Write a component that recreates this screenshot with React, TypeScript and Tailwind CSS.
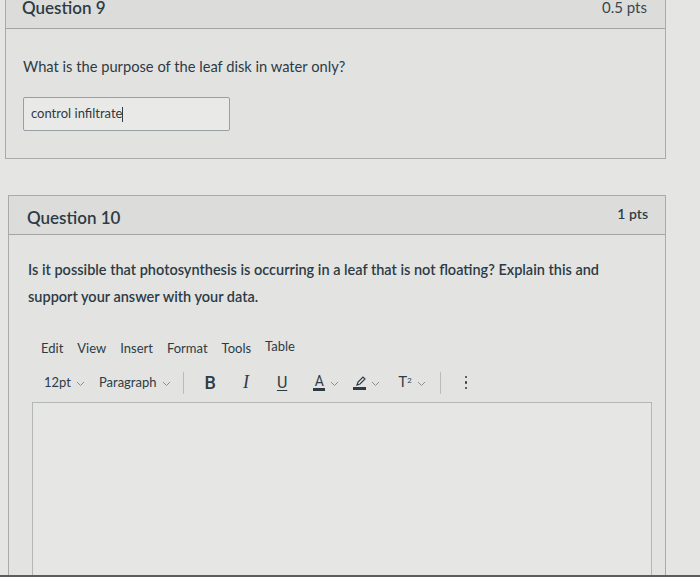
import React from 'react'

function Chevron() {
  return (
    <svg width="9" height="6" viewBox="0 0 9 6" className="ml-[5px] mt-[2px]" fill="none" stroke="#8a9096" strokeWidth="1">
      <path d="M1 1l3.5 3.5L8 1" />
    </svg>
  )
}

export default function App() {
  const font = { fontFamily: 'Lato, "Open Sans", sans-serif' }
  return (
    <div style={font} className="relative w-[700px] h-[577px] overflow-hidden bg-[#e5e6e4] text-[#2d3b45]">
      {/* Question 9 */}
      <div className="ml-[5px] -mt-[14px] w-[661px] border border-[#a9abaa] bg-[#e2e3e1]">
        <div className="flex items-center justify-between h-[42px] pl-[16px] pr-[18px] bg-[#dcdddb] border-b border-[#a3a5a4]">
          <span className="text-[17px] font-semibold">Question 9</span>
          <span className="text-[15px] text-[#3a454e]">0.5 pts</span>
        </div>
        <div className="h-[129px] pl-[17px] pt-[27px]">
          <p className="text-[14.7px] leading-[20px]">What is the purpose of the leaf disk in water only?</p>
          <div className="mt-[21px] w-[207px] h-[34px] border border-[#98a0a6] rounded-[2px] bg-[#e9eae8] flex items-center pl-[7px] text-[13px]">
            control infiltrate<span className="w-px h-[15px] bg-[#2d3b45]" />
          </div>
        </div>
      </div>

      {/* Question 10 */}
      <div className="ml-[8px] mt-[36px] w-[658px] h-[420px] border border-[#a9abaa] bg-[#e3e4e2]">
        <div className="flex items-center justify-between h-[39px] pl-[18px] pr-[17px] bg-[#dcdddb] border-b border-[#a3a5a4]">
          <span className="text-[17px] font-semibold mt-[6px]">Question 10</span>
          <span className="text-[14px] font-semibold -mt-[4px]">1 pts</span>
        </div>
        <div className="pl-[19px] pr-[14px] pt-[21px]">
          <p className="text-[14.5px] leading-[27px] font-semibold w-[600px]">
            Is it possible that photosynthesis is occurring in a leaf that is not floating? Explain this and support your answer with your data.
          </p>
          <div className="mt-[29px] ml-[13px] flex items-center gap-[14px] text-[13px] text-[#2d3b45]">
            <span>Edit</span>
            <span>View</span>
            <span>Insert</span>
            <span>Format</span>
            <span>Tools</span>
            <span className="-mt-[4px]">Table</span>
          </div>
          <div className="mt-[13px] ml-[16px] flex items-center h-[22px] text-[13px]">
            <span>12pt</span>
            <Chevron />
            <span className="ml-[14px]">Paragraph</span>
            <Chevron />
            <span className="ml-[12px] w-px h-[22px] bg-[#b8bcbf]" />
            <span className="ml-[21px] text-[18px] font-medium" style={{ fontFamily: 'Roboto, sans-serif' }}>B</span>
            <span className="ml-[27px] text-[18px] italic" style={{ fontFamily: '"Liberation Serif", serif' }}>I</span>
            <span className="ml-[28px] text-[16px] underline underline-offset-2" style={{ fontFamily: 'Roboto, sans-serif' }}>U</span>
            <span className="ml-[26px] flex flex-col items-center">
              <span className="text-[14px] leading-[14px]" style={{ fontFamily: 'Roboto, sans-serif' }}>A</span>
              <span className="w-[12px] h-[3px] bg-[#2d3b45]" />
            </span>
            <Chevron />
            <span className="ml-[14px] flex flex-col items-center">
              <svg width="12" height="12" viewBox="0 0 12 12" fill="none" stroke="#2d3b45" strokeWidth="1.2">
                <path d="M3 10l1-3 5-5 2 2-5 5z" />
              </svg>
              <span className="w-[13px] h-[3px] bg-[#2d3b45]" />
            </span>
            <Chevron />
            <span className="ml-[18px] text-[15px]" style={{ fontFamily: 'Roboto, sans-serif' }}>
              T<sup className="text-[8px]">2</sup>
            </span>
            <Chevron />
            <span className="ml-[14px] w-px h-[22px] bg-[#b8bcbf]" />
            <span className="ml-[24px] flex flex-col gap-[3px]">
              <span className="w-[2.5px] h-[2.5px] rounded-full bg-[#2d3b45]" />
              <span className="w-[2.5px] h-[2.5px] rounded-full bg-[#2d3b45]" />
              <span className="w-[2.5px] h-[2.5px] rounded-full bg-[#2d3b45]" />
            </span>
          </div>
          <div className="mt-[8px] ml-[4px] w-[620px] h-[200px] border border-[#b4b7b8] bg-[#e6e7e5]" />
        </div>
      </div>

      <div className="absolute bottom-0 left-0 w-full h-[2px] bg-[#5a5d60]" />
    </div>
  )
}
